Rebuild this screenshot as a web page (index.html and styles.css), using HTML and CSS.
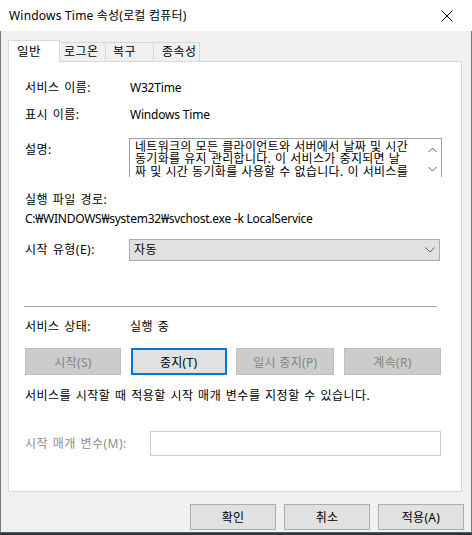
FILE: index.html
```html
<!DOCTYPE html>
<html lang="ko">
<head>
  <meta charset="UTF-8" />
  <title>Windows Time 속성(로컬 컴퓨터)</title>
  <link rel="stylesheet" href="styles.css">
</head>
<body>

  <div class="window">
    <div class="titlebar">
      <span class="title">Windows Time 속성(로컬 컴퓨터)</span>
      <svg class="close" width="12" height="12" viewBox="0 0 12 12">
        <path d="M0.5 0.5L11.5 11.5M11.5 0.5L0.5 11.5" stroke="#000" stroke-width="1" fill="none"/>
      </svg>
    </div>

    <div class="client">
      <div class="tabs">
        <div class="tab active">일반</div>
        <div class="tab t-logon">로그온</div>
        <div class="tab t-recovery">복구</div>
        <div class="tab t-deps">종속성</div>
      </div>

      <div class="panel">
        <div class="row r-name">
          <span class="label">서비스 이름:</span>
          <span class="value latin">W32Time</span>
        </div>
        <div class="row r-display">
          <span class="label">표시 이름:</span>
          <span class="value latin">Windows Time</span>
        </div>
        <div class="row r-desc">
          <span class="label">설명:</span>
          <div class="desc-box">
            <div class="desc-text">네트워크의 모든 클라이언트와 서버에서 날짜 및 시간<br>동기화를 유지 관리합니다. 이 서비스가 중지되면 날<br>짜 및 시간 동기화를 사용할 수 없습니다. 이 서비스를<br>사용하지 않도록 설정하면 이 서비스에 명시적으로<br>종속된 모든 서비스가 시작되지 않습니다.</div>
            <div class="scrollbar">
              <svg width="9" height="6" viewBox="0 0 9 6"><path d="M0.5 5L4.5 1L8.5 5" stroke="#606060" fill="none"/></svg>
              <svg width="9" height="6" viewBox="0 0 9 6"><path d="M0.5 1L4.5 5L8.5 1" stroke="#606060" fill="none"/></svg>
            </div>
          </div>
        </div>
        <div class="row r-path-label ko">실행 파일 경로:</div>
        <div class="row r-path">C:₩WINDOWS₩system32₩svchost.exe -k LocalService</div>
        <div class="row r-start">
          <span class="label">시작 유형(E):</span>
          <div class="select">
            <span class="ko">자동</span>
            <svg width="10" height="6" viewBox="0 0 10 6"><path d="M0.5 0.5L5 5L9.5 0.5" stroke="#606060" fill="none"/></svg>
          </div>
        </div>

        <div class="separator"></div>

        <div class="row r-status">
          <span class="label">서비스 상태:</span>
          <span class="value ko">실행 중</span>
        </div>
        <div class="actions">
          <button class="btn b-start" disabled>시작(S)</button>
          <button class="btn b-stop focused">중지(T)</button>
          <button class="btn b-pause" disabled>일시 중지(P)</button>
          <button class="btn b-resume" disabled>계속(R)</button>
        </div>
        <div class="row r-hint ko">서비스를 시작할 때 적용할 시작 매개 변수를 지정할 수 있습니다.</div>
        <div class="row r-params">
          <span class="label disabled">시작 매개 변수(M):</span>
          <input class="params-input" type="text" disabled />
        </div>
      </div>

      <div class="footer">
        <button class="btn dlg">확인</button>
        <button class="btn dlg">취소</button>
        <button class="btn dlg">적용(A)</button>
      </div>
    </div>
  </div>

</body>
</html>
```

FILE: styles.css
```css
body {
  margin: 0;
  background-color: #2b3440;
  font-family: "Noto Sans", "Noto Sans CJK KR", sans-serif;
  font-size: 12px;
  color: #000;
}

.window {
  width: 472px;
  height: 533px;
  background-color: #f0f0f0;
  display: flex;
  flex-direction: column;
}

.titlebar {
  height: 31px;
  background-color: #fff;
  display: flex;
  align-items: center;
  justify-content: space-between;
  padding: 0 19px 0 9px;
  flex-shrink: 0;
}

.title {
  line-height: 16px;
  letter-spacing: 0.2px;
}

.client {
  flex: 1;
  border-left: 1px solid #7a7a7a;
  border-right: 1px solid #7a7a7a;
  border-bottom: 1px solid #5a5a5a;
}

/* korean text is a bit wider in the original */
.ko,
.label,
.tab {
  letter-spacing: 0.5px;
  word-spacing: 1px;
}

.latin {
  letter-spacing: -0.2px;
}

/* tabs */
.tabs {
  display: flex;
  align-items: flex-end;
  padding: 9px 0 0 7px;
  height: 21px;
}

.tab {
  height: 18px;
  line-height: 18px;
  border-top: 1px solid #d9d9d9;
  border-right: 1px solid #d9d9d9;
  background-color: #f0f0f0;
  padding-left: 4px;
  box-sizing: content-box;
  white-space: nowrap;
  overflow: hidden;
}

.tab.active {
  position: relative;
  z-index: 1;
  height: 21px;
  line-height: 22px;
  width: 42px;
  padding-left: 8px;
  margin-bottom: -1px;
  border-left: 1px solid #d9d9d9;
  background-color: #fff;
  font-size: 12.5px;
}

.t-logon { width: 41px; }
.t-recovery { padding-left: 7px; width: 40px; }
.t-deps { width: 37px; padding-left: 8px; }

/* main panel */
.panel {
  margin-left: 7px;
  width: 420px;
  height: 429px;
  padding: 0 16px 0 16px;
  background-color: #fff;
  border: 1px solid #d9d9d9;
  display: flex;
  flex-direction: column;
  align-items: flex-start;
}

.row {
  display: flex;
  align-items: center;
  line-height: 16px;
  white-space: nowrap;
}

.label {
  width: 105px;
  flex-shrink: 0;
}

.label.disabled {
  color: #8d8d8d;
  width: 125px;
}

.r-name { margin-top: 18px; }
.r-display { margin-top: 11px; }

.r-desc {
  margin-top: 15px;
  align-items: flex-start;
}

.r-desc .label {
  width: 104px;
  padding-top: 4px;
}

.desc-box {
  width: 311px;
  height: 38px;
  border: 1px solid #a0a0a0;
  border-bottom: none;
  display: flex;
  overflow: hidden;
}

.desc-text {
  flex: 1;
  padding: 2px 0 0 5px;
  line-height: 12.3px;
  letter-spacing: 0.3px;
  word-spacing: 0.5px;
  overflow: hidden;
}

.scrollbar {
  width: 17px;
  display: flex;
  flex-direction: column;
  align-items: center;
  gap: 13px;
  padding-top: 8px;
  background-color: #fff;
}

.r-path-label { margin-top: 15px; }

.r-path {
  margin-top: 3px;
  letter-spacing: -0.25px;
}

.r-start { margin-top: 12px; }

.r-start .label {
  width: 104px;
}

.select {
  width: 305px;
  height: 20px;
  padding: 0 0 0 4px;
  border: 1px solid #adadad;
  background-color: #e1e1e1;
  display: flex;
  align-items: center;
  justify-content: space-between;
}

.select svg {
  margin-right: 4px;
}

.separator {
  margin: 45px 0 0 -1px;
  width: 413px;
  height: 1px;
  background-color: #a0a0a0;
}

.r-status { margin-top: 12px; }

/* buttons */
.actions {
  margin-top: 13px;
  display: flex;
  width: 416px;
  justify-content: space-between;
}

.btn {
  font-family: inherit;
  font-size: 12px;
  height: 27px;
  padding: 0;
  border: 1px solid #adadad;
  background-color: #e1e1e1;
  color: #000;
  letter-spacing: 0.3px;
}

.btn:disabled {
  background-color: #cccccc;
  border-color: #bfbfbf;
  color: #838383;
}

.btn.focused {
  border: 2px solid #0078d7;
}

.b-start { width: 96px; }
.b-stop { width: 96px; }
.b-pause { width: 98px; }
.b-resume { width: 97px; }

.r-hint { margin-top: 13px; }

.r-params { margin-top: 27px; }

.params-input {
  width: 289px;
  height: 23px;
  padding: 0;
  border: 1px solid #cccccc;
  background-color: #fff;
}

/* dialog buttons */
.footer {
  display: flex;
  justify-content: flex-end;
  gap: 8px;
  margin-top: 12px;
  padding-right: 7px;
}

.btn.dlg {
  width: 86px;
  height: 26px;
}
```
